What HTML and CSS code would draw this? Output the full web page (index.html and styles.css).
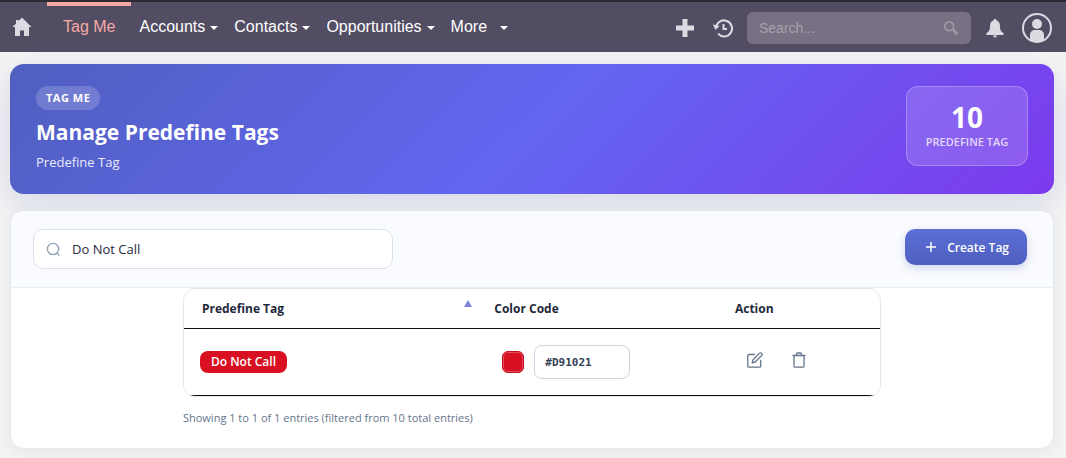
FILE: index.html
```html
<!DOCTYPE html>
<html lang="en">
<head>
    <meta charset="UTF-8">
    <meta name="viewport" content="width=device-width, initial-scale=1">
    <title>Manage Predefine Tags</title>
    <link rel="stylesheet" href="styles.css">
</head>
<body>
<nav class="navbar">
    <a class="home" href="#" aria-label="Home">
        <svg width="20" height="20" viewBox="0 0 20 20"><path fill="currentColor" d="M10 .5 19.500 10H17v9h-5v-5.500H8V19H3v-9H.5L4 6.500V3h2.500v1z"/></svg>
    </a>
    <ul class="menu">
        <li><a class="active" href="#">Tag Me</a></li>
        <li><a href="#">Accounts<span class="caret"></span></a></li>
        <li><a href="#">Contacts<span class="caret"></span></a></li>
        <li><a href="#">Opportunities<span class="caret"></span></a></li>
        <li><a class="more" href="#">More<span class="caret"></span></a></li>
    </ul>
    <div class="tools">
        <button class="tool add" type="button" aria-label="Quick create">
            <svg width="20" height="20" viewBox="0 0 20 20"><path fill="currentColor" d="M7.500 1h5v6.500H19v5h-6.500V19h-5v-6.500H1v-5h6.500z"/></svg>
        </button>
        <button class="tool" type="button" aria-label="Recently viewed">
            <svg width="20" height="20" viewBox="0 0 20 20" fill="none" stroke="currentColor" stroke-width="2"><path d="M3 10.500A8 8 0 1 1 5 15.700M10.500 6v5H14"/><path fill="currentColor" stroke="none" d="M0 6.500 6.500 8 2.500 12z"/></svg>
        </button>
        <div class="global-search">
            <input type="text" placeholder="Search..." aria-label="Search">
            <svg width="16" height="16" viewBox="0 0 18 18" fill="none" stroke="currentColor"><circle cx="7" cy="7" r="5" stroke-width="2"/><path stroke-width="3.500" stroke-linecap="round" d="m12.500 12 2.500 3"/></svg>
        </div>
        <button class="tool bell" type="button" aria-label="Notifications">
            <svg width="20" height="20" viewBox="0 0 20 20"><path fill="currentColor" d="M10 1c1 0 1.500.7 1.500 1.500C14 3.200 15 5.500 15 8c0 4 .8 5.500 3.500 7v2h-17v-2C4.200 13.500 5 12 5 8c0-2.500 1-4.800 3.500-5.500C8.500 1.700 9 1 10 1zM8 17.500h4a2 2 0 0 1-4 0z"/></svg>
        </button>
        <button class="tool" type="button" aria-label="Profile">
            <svg width="30" height="30" viewBox="0 0 30 30"><circle cx="15" cy="15" r="14" fill="none" stroke="currentColor" stroke-width="2"/><circle cx="15" cy="11" r="5" fill="currentColor"/><path fill="currentColor" d="M8 27v-5c0-3 2-5 5-5h4c3 0 5 2 5 5v5c-3 3-11 3-14 0z"/></svg>
        </button>
    </div>
</nav>

<main class="page">
    <header class="hero">
        <div class="hero-text">
            <span class="eyebrow">TAG ME</span>
            <h1>Manage Predefine Tags</h1>
            <p>Predefine Tag</p>
        </div>
        <div class="stat">
            <strong>10</strong>
            <span>PREDEFINE TAG</span>
        </div>
    </header>

    <section class="card">
        <div class="toolbar">
            <label class="search">
                <svg width="15" height="15" viewBox="0 0 16 16" fill="none" stroke="currentColor" stroke-width="1.500" stroke-linecap="round"><circle cx="7.500" cy="7.500" r="6"/><path d="m12 12 2 2"/></svg>
                <input type="text" value="Do Not Call" aria-label="Search tags">
            </label>
            <button class="create" type="button">
                <svg width="12" height="12" viewBox="0 0 12 12" fill="none" stroke="currentColor" stroke-width="1.500"><path d="M6 1v10M1 6h10"/></svg>
                Create Tag
            </button>
        </div>

        <div class="list">
            <div class="table-wrap">
                <table>
                    <thead>
                    <tr>
                        <th class="col-tag"><div class="sort">Predefine Tag<span class="asc"></span></div></th>
                        <th class="col-color">Color Code</th>
                        <th>Action</th>
                    </tr>
                    </thead>
                    <tbody>
                    <tr>
                        <td><span class="tag">Do Not Call</span></td>
                        <td>
                            <div class="color">
                                <input class="swatch" type="color" value="#d91021" aria-label="Tag color">
                                <input class="code" type="text" value="#D91021" aria-label="Color code">
                            </div>
                        </td>
                        <td>
                            <div class="actions">
                                <button type="button" aria-label="Edit">
                                    <svg width="16" height="16" viewBox="0 0 16 16" fill="none" stroke="currentColor" stroke-width="1.300" stroke-linejoin="round" stroke-linecap="round"><path d="M7.500 2.500H2A1.200 1.200 0 0 0 .8 3.700V14A1.200 1.200 0 0 0 2 15.200h10.500a1.200 1.200 0 0 0 1.200-1.200V8.500"/><path d="M12.400 1.400a1.500 1.500 0 0 1 2.200 2.200L8.200 10l-3 .8.800-3z"/></svg>
                                </button>
                                <button type="button" aria-label="Delete">
                                    <svg width="16" height="16" viewBox="0 0 16 16" fill="none" stroke="currentColor" stroke-width="1.300" stroke-linejoin="round" stroke-linecap="round"><path d="M2 3.500h12M3 3.500V14a1.200 1.200 0 0 0 1.200 1.200h7.600A1.200 1.200 0 0 0 13 14V3.500M5.500 3.500V2a1 1 0 0 1 1-1h3a1 1 0 0 1 1 1v1.500"/></svg>
                                </button>
                            </div>
                        </td>
                    </tr>
                    </tbody>
                </table>
            </div>
            <p class="info">Showing 1 to 1 of 1 entries (filtered from 10 total entries)</p>
        </div>
    </section>
</main>
</body>
</html>
```
FILE: styles.css
```css
*{
    box-sizing: border-box;
}
body{
    margin: 0;
    background: #f3f3f3;
    color: #1e293b;
    font-family: "Open Sans", "Noto Sans", sans-serif;
    font-size: 13px;
}
button,input{
    font: inherit;
    color: inherit;
}
button{
    padding: 0;
    border: 0;
    background: none;
    cursor: pointer;
}
svg{
    display: block;
    flex: none;
}

/* top bar */
.navbar{
    display: flex;
    height: 52px;
    padding: 0 14px 0 12px;
    border-top: 2px solid #2c2932;
    background: #534d64;
    color: #dddae2;
    font-family: "Liberation Sans", Arial, sans-serif;
    font-size: 16px;
}
.home{
    display: flex;
    align-items: center;
    margin-right: 15px;
    color: inherit;
}
.menu{
    display: flex;
    margin: 0;
    padding: 0;
    list-style: none;
}
.menu a{
    display: flex;
    align-items: center;
    gap: 5px;
    height: 50px;
    padding: 0 8px;
    color: #fff;
    text-decoration: none;
}
.menu .active{
    padding: 0 16px;
    color: #f5a9a3;
    box-shadow: inset 0 4px #f5a9a3;
}
.menu .more{
    gap: 13px;
}
.caret{
    margin-top: 2px;
    border: 4px solid transparent;
    border-top-color: #fff;
    border-bottom: 0;
}
.tools{
    display: flex;
    align-items: center;
    gap: 14px;
    margin-left: auto;
    padding-top: 2px;
}
.tool{
    color: inherit;
}
.add{
    margin-right: 4px;
}
.bell{
    margin-right: 3px;
}
.global-search{
    display: flex;
    align-items: center;
    width: 224px;
    height: 32px;
    padding: 0 12px;
    border-radius: 6px;
    background: #777183;
    color: #9e99a8;
}
.global-search input{
    flex: 1;
    min-width: 0;
    padding: 0;
    border: 0;
    outline: 0;
    background: none;
    font-size: 14px;
}
.global-search input::placeholder{
    color: #a5a1ae;
}

.page{
    padding: 12px 12px 10px 10px;
}

/* banner */
.hero{
    display: flex;
    align-items: flex-start;
    justify-content: space-between;
    min-height: 130px;
    padding: 22px 26px;
    border-radius: 14px;
    background: linear-gradient(135deg, #4f5fbf 0%, #6366f1 50%, #7c3aed 100%);
    box-shadow: 0 10px 30px rgba(79, 95, 191, .18);
    color: #fff;
}
.eyebrow{
    display: inline-block;
    padding: 0 10px;
    border-radius: 12px;
    background: rgba(255, 255, 255, .18);
    font-size: 11px;
    font-weight: 700;
    letter-spacing: 0.5px;
    line-height: 24px;
}
.hero h1{
    margin: 8px 0 6px;
    font-size: 21px;
    font-weight: 700;
    line-height: 28px;
}
.hero p{
    margin: 0;
    line-height: 20px;
    opacity: .88;
}
.stat{
    display: flex;
    flex-direction: column;
    align-items: center;
    min-width: 122px;
    padding: 14px 16px;
    border: 1px solid rgba(255, 255, 255, .25);
    border-radius: 12px;
    background: rgba(255, 255, 255, .15);
}
.stat strong{
    font-size: 28px;
    line-height: 32px;
}
.stat span{
    font-size: 11px;
    font-weight: 600;
    line-height: 18px;
    opacity: .75;
}

/* list card */
.card{
    margin-top: 16px;
    overflow: hidden;
    border: 1px solid #e2e8f0;
    border-radius: 14px;
    background: #fff;
    box-shadow: 0 4px 16px rgba(15, 23, 42, .05);
}
.toolbar{
    display: flex;
    align-items: flex-start;
    justify-content: space-between;
    padding: 18px 26px 18px 22px;
    border-bottom: 1px solid #e8edf4;
    background: #fafbfe;
}
.search{
    display: flex;
    align-items: center;
    gap: 11px;
    width: 360px;
    height: 40px;
    padding: 0 12px;
    border: 1px solid #d9e0ea;
    border-radius: 10px;
    background: #fff;
    color: #94a3b8;
}
.search input{
    flex: 1;
    min-width: 0;
    padding: 0;
    border: 0;
    outline: 0;
    background: none;
    color: #1e293b;
}
.create{
    display: flex;
    align-items: center;
    justify-content: center;
    gap: 10px;
    height: 36px;
    padding: 0 18px 0 20px;
    border-radius: 10px;
    background: linear-gradient(#5b6fd6, #4f5fbf);
    box-shadow: 0 3px 8px rgba(79, 95, 191, .25);
    color: #fff;
    font-size: 12px;
    font-weight: 600;
}
.list{
    width: 67%;
    margin: 0 auto;
    padding-bottom: 20px;
}
.table-wrap{
    overflow: hidden;
    border: 1px solid #e2e8f0;
    border-radius: 12px;
}
table{
    width: 100%;
    border-collapse: separate;
    border-spacing: 0;
    table-layout: fixed;
}
.col-tag{
    width: 42%;
}
.col-color{
    width: 35%;
}
th{
    height: 40px;
    padding: 0 18px;
    border-bottom: 1px solid #111;
    text-align: left;
    font-size: 12px;
    font-weight: 700;
}
td{
    height: 67px;
    padding: 0 16px;
    border-bottom: 1px solid #111;
}
th:last-child,td:last-child{
    padding-left: 15px;
}
.sort{
    display: flex;
    justify-content: space-between;
}
.asc{
    margin-right: -14px;
    align-self: flex-start;
    border: 4px solid transparent;
    border-top: 0;
    border-bottom: 7px solid #7c83de;
}
.tag{
    display: inline-block;
    padding: 0 11px;
    border-radius: 8px;
    background: #d91021;
    color: #fff;
    font-size: 12px;
    font-weight: 600;
    line-height: 22px;
}
.color{
    display: flex;
    align-items: center;
    gap: 10px;
    padding-left: 10px;
}
.swatch{
    width: 22px;
    height: 22px;
    padding: 0;
    border: 1px solid #c00f1e;
    border-radius: 6px;
    background: #d91021;
    box-shadow: inset 0 0 0 1px #e4505d;
    appearance: none;
}
.swatch::-webkit-color-swatch-wrapper{
    padding: 2px;
}
.swatch::-webkit-color-swatch{
    border: 0;
}
.code{
    width: 96px;
    height: 34px;
    padding: 0 10px;
    border: 1px solid #cbd5e1;
    border-radius: 8px;
    background: #fff;
    color: #334155;
    font-family: "DejaVu Sans Mono", monospace;
    font-size: 11px;
    font-weight: 700;
}
.actions{
    display: flex;
    gap: 28px;
    padding: 0 12px 4px;
    color: #64748b;
}
.actions button{
    color: inherit;
}
.info{
    margin: 11px 0 0;
    color: #64748b;
    font-size: 11px;
    line-height: 20px;
}
```
